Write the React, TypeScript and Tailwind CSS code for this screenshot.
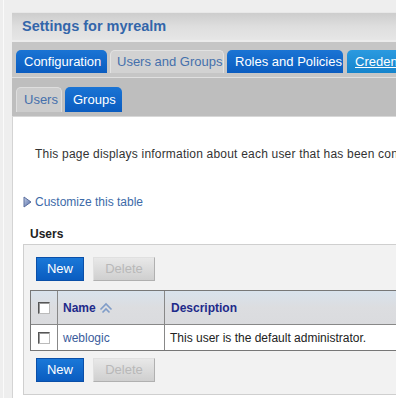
import React from "react";

function Checkbox() {
  return (
    <div className="w-[12px] h-[12px] bg-white border border-[#555] border-r-[#bbb] border-b-[#bbb] shadow-[inset_1px_1px_0_#999]" />
  );
}

function Btn({ label, primary, w }: { label: string; primary?: boolean; w: string }) {
  return primary ? (
    <div
      className={`${w} h-[24px] flex items-center justify-center text-[13px] text-white bg-gradient-to-b from-[#1a78d8] to-[#0a5cc0] border border-[#0a4fa8]`}
    >
      {label}
    </div>
  ) : (
    <div
      className={`${w} h-[24px] flex items-center justify-center text-[13px] text-[#b8b8b8] bg-gradient-to-b from-[#e8e8e8] to-[#cfcfcf] border border-[#b0b0b0] border-t-[#e0e0e0] border-l-[#e0e0e0]`}
    >
      {label}
    </div>
  );
}

function SortIcon() {
  return (
    <svg width="14" height="12" viewBox="0 0 14 12" className="ml-[3px]">
      <path d="M1.5 7.5 L7 2 L12.5 7.5" fill="none" stroke="#7f9cc8" strokeWidth="1.6" />
      <path d="M3.5 10.5 L7 7 L10.5 10.5" fill="none" stroke="#7f9cc8" strokeWidth="1.6" />
    </svg>
  );
}

export default function App() {
  return (
    <div className="w-[396px] h-[398px] overflow-hidden bg-[#eeeeee] flex font-['Liberation_Sans',Arial,sans-serif]">
      <div className="w-[12px] shrink-0 pl-[3px]">
        <div className="h-full border-l border-[#fafafa]" />
      </div>
      <div className="w-[430px] shrink-0 pt-[12px] flex flex-col">
        {/* Title */}
        <div className="h-[28px] flex items-center pl-[10px] bg-gradient-to-b from-[#cdcdcd] via-[#dedede] to-[#e6e6e6] border-t border-[#e8e8e8]">
          <span className="text-[14.5px] font-bold text-[#3366aa] whitespace-nowrap">Settings for myrealm</span>
        </div>
        {/* Main tabs */}
        <div className="h-[38px] bg-[#c6c6c6] border-t-2 border-[#ececec] flex items-end gap-[3px] pl-[4px] pb-[5px] shadow-[inset_0_-1px_0_#e0e0e0] whitespace-nowrap">
          <div className="shrink-0 w-[91px] h-[23px] rounded-t-[5px] bg-gradient-to-b from-[#1a74d4] to-[#0a5cc0] text-white text-[13px] flex items-center px-[8px]">
            Configuration
          </div>
          <div className="shrink-0 w-[114px] h-[23px] rounded-t-[5px] bg-[#d2d2d2] border border-b-0 border-[#e2e2e2] text-[#4570ac] text-[13px] flex items-center px-[6px]">
            Users and Groups
          </div>
          <div className="shrink-0 w-[116px] h-[23px] rounded-t-[5px] bg-gradient-to-b from-[#1a74d4] to-[#0a5cc0] text-white text-[13px] flex items-center px-[8px]">
            Roles and Policies
          </div>
          <div className="shrink-0 ml-[1px] w-[100px] h-[23px] rounded-t-[5px] bg-gradient-to-b from-[#2a9ae0] to-[#1584cc] text-white text-[13px] flex items-center px-[8px] underline">
            Credentials
          </div>
        </div>
        {/* Sub tabs */}
        <div className="h-[39px] bg-[#bebebe] flex items-end gap-[3px] pl-[4px] pb-[4px] border-b border-[#d8d8d8] whitespace-nowrap">
          <div className="w-[46px] h-[25px] rounded-t-[5px] bg-[#cdcdcd] border border-b-0 border-[#dedede] text-[#4570ac] text-[13px] flex items-center px-[7px]">
            Users
          </div>
          <div className="w-[57px] h-[25px] rounded-t-[5px] bg-gradient-to-b from-[#1a74d4] to-[#0a5cc0] text-white text-[13px] flex items-center px-[8px]">
            Groups
          </div>
        </div>
        {/* Content */}
        <div className="flex-1 bg-white border-l border-[#d4d4d4] flex flex-col">
          <div className="pt-[30px] pl-[22px] text-[12px] leading-[14px] tracking-[0.2px] text-[#333] whitespace-nowrap">
            This page displays information about each user that has been configured in this security realm.
          </div>
          <div className="mt-[34px] pl-[10px] flex items-center text-[12px] leading-[14px] text-[#3d6aa8]">
            <svg width="9" height="12" viewBox="0 0 9 12" className="mr-[3px]">
              <defs>
                <linearGradient id="tri" x1="0" y1="0" x2="1" y2="1">
                  <stop offset="0" stopColor="#c8d4ea" />
                  <stop offset="1" stopColor="#4a62a0" />
                </linearGradient>
              </defs>
              <path d="M1 1 L8 6 L1 11 Z" fill="url(#tri)" stroke="#5a6e9e" strokeWidth="1" />
            </svg>
            Customize this table
          </div>
          <div className="mt-[18px] pl-[17px] text-[12px] leading-[14px] font-bold text-[#222]">Users</div>
          <div className="mt-[3px] ml-[10px] h-[151px] bg-[#f2f2f2] border border-[#cfcfcf] border-r-0 flex flex-col">
            <div className="pt-[12px] pl-[12px] flex gap-[9px]">
              <Btn label="New" primary w="w-[48px]" />
              <Btn label="Delete" w="w-[62px]" />
            </div>
            <div className="mt-[9px] ml-[6px] border border-[#777] border-r-0 bg-white">
              <div className="flex h-[34px] bg-gradient-to-b from-[#d8e2ec] via-[#dcdde0] to-[#dadbde] border-b border-[#888]">
                <div className="w-[27px] flex items-center justify-center border-r border-[#888]">
                  <Checkbox />
                </div>
                <div className="w-[107px] flex items-center pl-[5px] border-r border-[#888] text-[12px] font-bold text-[#1e2a8a]">
                  Name
                  <SortIcon />
                </div>
                <div className="flex-1 flex items-center pl-[6px] text-[12px] font-bold text-[#1e2a8a]">
                  Description
                </div>
              </div>
              <div className="flex h-[25px]">
                <div className="w-[27px] flex items-center justify-center border-r border-[#888]">
                  <Checkbox />
                </div>
                <div className="w-[107px] flex items-center pl-[5px] border-r border-[#888] text-[12px] text-[#3a5c9c]">
                  weblogic
                </div>
                <div className="flex-1 flex items-center pl-[5px] text-[12px] text-[#222] whitespace-nowrap">
                  This user is the default administrator.
                </div>
              </div>
            </div>
            <div className="mt-[7px] pl-[12px] flex gap-[9px]">
              <Btn label="New" primary w="w-[48px]" />
              <Btn label="Delete" w="w-[62px]" />
            </div>
          </div>
        </div>
      </div>
    </div>
  );
}
